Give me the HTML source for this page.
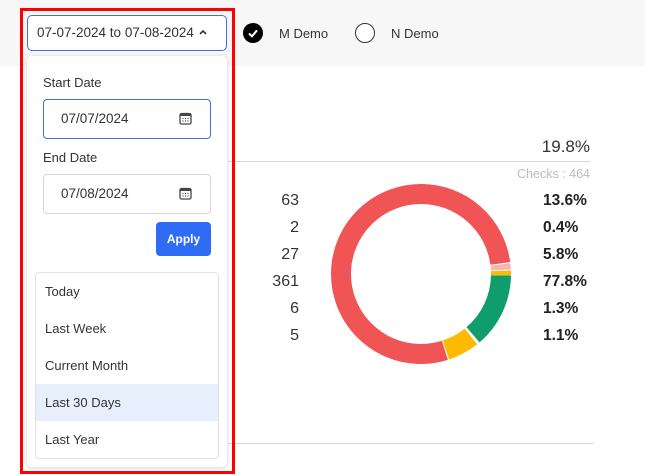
<!DOCTYPE html>
<html><head><meta charset="utf-8"><style>
*{margin:0;padding:0;box-sizing:border-box}
body{width:645px;height:476px;overflow:hidden;background:#fff;font-family:"Liberation Sans",sans-serif;color:#333;position:relative}
.abs{position:absolute}
.top{left:0;top:0;width:645px;height:66px;background:#f7f7f7}
.red{left:20px;top:8px;width:215px;height:466px;border:3px solid #f00}
.btn{left:27px;top:15px;width:200px;height:36px;border:1.5px solid #3d6fe6;border-radius:5px;background:#fff;font-size:13.5px;color:#333;padding:9px 0 0 9px;white-space:nowrap}
.panel{left:27px;top:56px;width:200px;height:411px;background:#fff;border-radius:5px;box-shadow:0 1px 5px rgba(0,0,0,.18)}
.lbl{font-size:13px;color:#333}
.inp{width:168px;height:40px;border:1px solid #d5d5da;border-radius:4px;font-size:13.5px;padding:11px 0 0 17px;color:#333;background:#fff}
.cal{position:absolute;right:18px;top:12px}
.apply{left:156px;top:222px;width:55px;height:34px;background:#2f6cf6;border-radius:4px;color:#fff;font-weight:bold;font-size:12px;text-align:center;line-height:34px}
.list{left:35px;top:272px;width:184px;height:187px;border:1px solid #e2e2e6;border-radius:4px;overflow:hidden}
.item{height:37px;line-height:37px;padding-left:9px;font-size:13px;color:#333}
.num{width:60px;text-align:right;font-size:16px;color:#333}
.pct{font-size:15.5px;font-weight:bold;color:#222}
</style></head><body>
<div class="abs top"></div>
<div class="abs" style="left:228px;top:161px;width:362px;height:1px;background:#d9d9d9"></div>
<div class="abs" style="left:228px;top:443px;width:366px;height:1px;background:#d9d9d9"></div>

<div class="abs" style="left:243px;top:23px;width:20px;height:20px;border-radius:50%;background:#000"><svg width="20" height="20"><path d="M6 10.5l3 2.8 5-6" stroke="#fff" stroke-width="2" fill="none"/></svg></div>
<div class="abs" style="left:279px;top:26px;font-size:13px;color:#333">M Demo</div>
<div class="abs" style="left:355px;top:23px;width:20px;height:20px;border-radius:50%;border:1.5px solid #333;background:#fff"></div>
<div class="abs" style="left:391px;top:26px;font-size:13px;color:#333">N Demo</div>

<div class="abs" style="right:55px;top:137px;font-size:17px;color:#333">19.8%</div>
<div class="abs" style="right:55px;top:167px;font-size:12.5px;color:#b8bcc4">Checks : 464</div>

<div class="abs num" style="left:239px;top:192px">63</div>
<div class="abs num" style="left:239px;top:219px">2</div>
<div class="abs num" style="left:239px;top:246px">27</div>
<div class="abs num" style="left:239px;top:273px">361</div>
<div class="abs num" style="left:239px;top:300px">6</div>
<div class="abs num" style="left:239px;top:327px">5</div>

<div class="abs pct" style="left:543px;top:192px">13.6%</div>
<div class="abs pct" style="left:543px;top:219px">0.4%</div>
<div class="abs pct" style="left:543px;top:246px">5.8%</div>
<div class="abs pct" style="left:543px;top:273px">77.8%</div>
<div class="abs pct" style="left:543px;top:300px">1.3%</div>
<div class="abs pct" style="left:543px;top:327px">1.1%</div>

<svg class="abs" style="left:330px;top:183px" width="182" height="182" viewBox="0 0 182 182">
<g transform="rotate(1 91 91)" fill="none" stroke-width="20">
<circle cx="91" cy="91" r="80" stroke="#0f9d6c" stroke-dasharray="67.6 435.1" stroke-dashoffset="0"/>
<circle cx="91" cy="91" r="80" stroke="#fdbb00" stroke-dasharray="28.5 474.2" stroke-dashoffset="-70.3"/>
<circle cx="91" cy="91" r="80" stroke="#f05454" stroke-dasharray="390.5 112.2" stroke-dashoffset="-99.9"/>
<circle cx="91" cy="91" r="80" stroke="#f8b4b4" stroke-dasharray="5.5 497.2" stroke-dashoffset="-491.4"/>
<circle cx="91" cy="91" r="80" stroke="#fdbb00" stroke-dasharray="4.5 498.2" stroke-dashoffset="-497.8"/>
</g></svg>

<div class="abs red"></div>
<div class="abs btn">07-07-2024 to 07-08-2024 <svg width="10" height="8" style="vertical-align:1px"><path d="M2 6l3-3 3 3" stroke="#333" stroke-width="1.6" fill="none"/></svg></div>
<div class="abs panel"></div>
<div class="abs lbl" style="left:43px;top:75px">Start Date</div>
<div class="abs inp" style="left:43px;top:99px;border:1.5px solid #3d6fe6">07/07/2024<svg class="cal" width="13" height="13" viewBox="0 0 13 13"><rect x="1" y="1.5" width="11" height="10.5" rx="1.5" fill="none" stroke="#444" stroke-width="1.3"/><rect x="1" y="1.5" width="11" height="2.5" fill="#444"/><path d="M3.5 6.5h1M6 6.5h1M8.5 6.5h1M3.5 9h1M6 9h1M8.5 9h1" stroke="#444" stroke-width="1.2"/></svg></div>
<div class="abs lbl" style="left:43px;top:150px">End Date</div>
<div class="abs inp" style="left:43px;top:174px">07/08/2024<svg class="cal" width="13" height="13" viewBox="0 0 13 13"><rect x="1" y="1.5" width="11" height="10.5" rx="1.5" fill="none" stroke="#444" stroke-width="1.3"/><rect x="1" y="1.5" width="11" height="2.5" fill="#444"/><path d="M3.5 6.5h1M6 6.5h1M8.5 6.5h1M3.5 9h1M6 9h1M8.5 9h1" stroke="#444" stroke-width="1.2"/></svg></div>
<div class="abs apply">Apply</div>
<div class="abs list">
<div class="item">Today</div>
<div class="item">Last Week</div>
<div class="item">Current Month</div>
<div class="item" style="background:#e7effc">Last 30 Days</div>
<div class="item">Last Year</div>
</div>
</body></html>
